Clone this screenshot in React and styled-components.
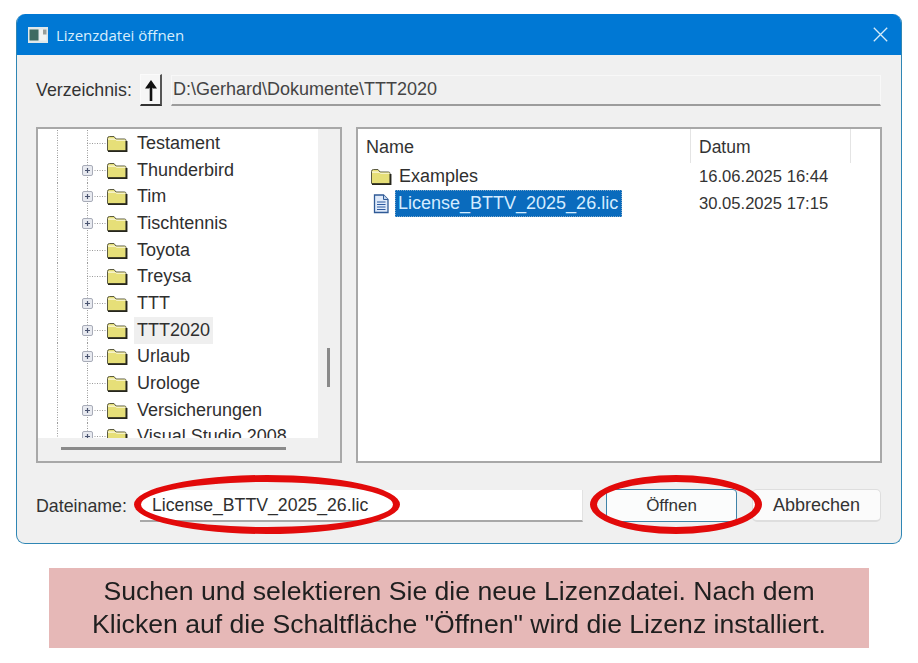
import React from 'react'
import styled, { createGlobalStyle } from 'styled-components'

const treeItems = [
  { name: 'Testament' },
  { name: 'Thunderbird', expandable: true },
  { name: 'Tim', expandable: true },
  { name: 'Tischtennis', expandable: true },
  { name: 'Toyota' },
  { name: 'Treysa' },
  { name: 'TTT', expandable: true },
  { name: 'TTT2020', expandable: true, current: true },
  { name: 'Urlaub', expandable: true },
  { name: 'Urologe' },
  { name: 'Versicherungen', expandable: true },
  { name: 'Visual Studio 2008', expandable: true },
]

const FolderShape = () => (
  <>
    <path d="M1.5 15V3.5Q1.5 1.5 3.5 1.5H8L10 4H18.5Q20 4 20 5.5V15Q20 16 18.5 16H2.5Q1.5 16 1.5 15Z" fill="#e6df78" stroke="#4a4a34" strokeWidth="0.9" />
    <path d="M2 4.8H9.5L10.5 5.8H19.5V4.8H10.5L8.5 3.4H2Z" fill="#fbf9e0" />
    <path d="M2 16.2H20.6V6" fill="none" stroke="#26261c" strokeWidth="1.7" />
  </>
)

const FolderIcon = () => (
  <svg width="22" height="18" viewBox="0 0 22 18">
    <FolderShape />
  </svg>
)

const TreeGlyph = ({ expandable }) => (
  <TreeSvg width="80" height="27" viewBox="0 0 80 27">
    <path d="M0.5 0V27" stroke="#9a9a9a" strokeDasharray="1 1.5" />
    <path d="M30.5 0V27" stroke="#9a9a9a" strokeDasharray="1 1.5" />
    <path d="M30 13.5H49" stroke="#9a9a9a" strokeDasharray="1 1.5" />
    {expandable && (
      <>
        <rect x="25.5" y="8.5" width="10" height="10" rx="1.5" fill="#e8eaf0" stroke="#a8acb8" />
        <path d="M28 13.5H33M30.5 11V16" stroke="#4a5470" strokeWidth="1.2" />
      </>
    )}
    <g transform="translate(49 5)">
      <FolderShape />
    </g>
  </TreeSvg>
)

const DocIcon = () => (
  <svg width="18" height="20" viewBox="0 0 18 20">
    <path d="M2.5 1H11.5L16 5.5V18.5H2.5Z" fill="#dfeafa" stroke="#2f5a96" strokeWidth="1.3" />
    <path d="M11.5 1V5.5H16" fill="#c4d6ee" stroke="#2f5a96" />
    <path d="M5 8H13.5M5 10.5H13.5M5 13H13.5M5 15.5H13.5" stroke="#2d5aa0" strokeWidth="1.2" />
  </svg>
)

export default function App() {
  return (
    <Page>
      <GlobalStyle />
      <Dialog>
        <TitleBar>
          <svg width="20" height="16" viewBox="0 0 20 16">
            <rect width="20" height="16" fill="#dfe8ea" />
            <rect x="1.5" y="2.5" width="9" height="11" fill="#3d6b62" />
            <rect x="11.5" y="2.5" width="7" height="11" fill="#f2f4f2" />
            <rect x="15" y="2.5" width="3.5" height="5" fill="#9a9f9a" />
          </svg>
          <TitleText>Lizenzdatei öffnen</TitleText>
          <CloseIcon width="15" height="15" viewBox="0 0 15 15">
            <path d="M0.8 0.8L14.2 14.2M14.2 0.8L0.8 14.2" stroke="#d6ecfa" strokeWidth="1.3" />
          </CloseIcon>
        </TitleBar>

        <Content>
          <Toolbar>
            <FieldLabel>Verzeichnis:</FieldLabel>
            <UpButton>
              <svg width="14" height="24" viewBox="0 0 14 24">
                <path d="M7 23V5" fill="none" stroke="#111" strokeWidth="2.6" />
                <path d="M7 2L13 10.5H9L7 8.5L5 10.5H1Z" fill="#111" />
              </svg>
            </UpButton>
            <PathField>D:\Gerhard\Dokumente\TTT2020</PathField>
          </Toolbar>

          <Panels>
            <TreePanel>
              <TreeView>
                {treeItems.map(item => (
                  <TreeRow key={item.name}>
                    <TreeGlyph expandable={item.expandable} />
                    <TreeLabel $current={item.current}>{item.name}</TreeLabel>
                  </TreeRow>
                ))}
              </TreeView>
              <VerticalTrack>
                <VerticalThumb />
              </VerticalTrack>
              <HorizontalTrack>
                <HorizontalThumb />
              </HorizontalTrack>
              <ScrollCorner />
            </TreePanel>

            <FilePanel>
              <FileGrid>
                <HeaderCell>Name</HeaderCell>
                <HeaderCell>Datum</HeaderCell>
                <HeaderCell />
              </FileGrid>
              <FileGrid>
                <NameCell>
                  <FolderIcon />
                  <FileName>Examples</FileName>
                </NameCell>
                <DateCell>16.06.2025 16:44</DateCell>
              </FileGrid>
              <FileGrid>
                <NameCell>
                  <DocSlot>
                    <DocIcon />
                  </DocSlot>
                  <FileName $selected>License_BTTV_2025_26.lic</FileName>
                </NameCell>
                <DateCell>30.05.2025 17:15</DateCell>
              </FileGrid>
            </FilePanel>
          </Panels>

          <Footer>
            <FieldLabel>Dateiname:</FieldLabel>
            <NameInput>License_BTTV_2025_26.lic</NameInput>
            <PrimaryButton>Öffnen</PrimaryButton>
            <SecondaryButton>Abbrechen</SecondaryButton>
            <NameOval />
            <ButtonOval />
          </Footer>
        </Content>
      </Dialog>

      <Caption>
        Suchen und selektieren Sie die neue Lizenzdatei. Nach dem
        <br />
        Klicken auf die Schaltfläche "Öffnen" wird die Lizenz installiert.
      </Caption>
    </Page>
  )
}

const GlobalStyle = createGlobalStyle`
  * {
    box-sizing: border-box;
  }

  body {
    margin: 0;
    background: #fff;
    font-family: 'Liberation Sans', Arial, sans-serif;
    color: #2b2b2b;
  }
`

const Page = styled.div`
  width: 918px;
  height: 663px;
  padding: 14px 16px 0;
  overflow: hidden;
  filter: blur(0.35px);
`

const Dialog = styled.div`
  width: 886px;
  height: 530px;
  border: 1px solid #2f86b4;
  border-top: 0;
  border-radius: 9px;
  background: #f0f0f0;
  overflow: hidden;
`

const TitleBar = styled.div`
  height: 41px;
  margin: 0 -1px;
  padding: 0 14px 0 12px;
  display: flex;
  align-items: center;
  gap: 8px;
  background: #0078d4;
`

const TitleText = styled.span`
  flex: 1;
  font-family: 'Open Sans', sans-serif;
  font-size: 15px;
  color: #d8eefc;
`

const CloseIcon = styled.svg`
  display: block;
`

const Content = styled.div`
  padding: 19px 19px 0;
`

const Toolbar = styled.div`
  height: 32px;
  display: flex;
  align-items: center;
`

const FieldLabel = styled.span`
  width: 104px;
  flex: none;
  font-size: 17.8px;
  color: #333;
  padding-top: 1px;
`

const UpButton = styled.div`
  width: 22px;
  height: 32px;
  flex: none;
  display: flex;
  align-items: center;
  justify-content: center;
  background: #f6f6f6;
  border-top: 1px solid #fbfbfb;
  border-left: 1px solid #fbfbfb;
  border-right: 2px solid #555;
  border-bottom: 2px solid #333;
`

const PathField = styled.div`
  flex: 1;
  height: 31px;
  margin: 0 1px 0 9px;
  padding-left: 1px;
  display: flex;
  align-items: center;
  font-size: 18px;
  color: #444;
  background: #f0f0f0;
  border-top: 1px solid #f8f8f8;
  border-left: 1px solid #f8f8f8;
  border-right: 1px solid #f8f8f8;
  border-bottom: 2px solid #9c9c9c;
`

const Panels = styled.div`
  margin-top: 21px;
  display: grid;
  grid-template-columns: 306px 526px;
  gap: 14px;
  height: 336px;
`

const TreePanel = styled.div`
  display: grid;
  grid-template-columns: 1fr 22px;
  grid-template-rows: 1fr 23px;
  min-height: 0;
  border: 2px solid #a8a8a8;
  background: #f0f0f0;
`

const TreeView = styled.div`
  padding: 1px 0 0 19px;
  background: #fff;
  overflow: hidden;
`

const TreeRow = styled.div`
  height: 26.7px;
  display: flex;
  align-items: center;
  font-size: 18px;
`

const TreeSvg = styled.svg`
  display: block;
  flex: none;
`

const TreeLabel = styled.span`
  height: 27px;
  padding: 0 3px;
  margin-left: -3px;
  line-height: 27px;
  color: #2f2f2f;
  background: ${props => (props.$current ? '#efefef' : 'transparent')};
`

const VerticalTrack = styled.div`
  padding: 219px 0 0 9px;
`

const VerticalThumb = styled.div`
  width: 3px;
  height: 39px;
  background: #8a8a8a;
`

const HorizontalTrack = styled.div`
  padding: 9px 0 0 23px;
`

const HorizontalThumb = styled.div`
  width: 225px;
  height: 3px;
  background: #8a8a8a;
`

const ScrollCorner = styled.div``

const FilePanel = styled.div`
  border: 2px solid #a8a8a8;
  background: #fff;
`

const FileGrid = styled.div`
  display: grid;
  grid-template-columns: 333px 160px 1fr;
  height: 27px;
  align-items: center;

  &:first-child {
    height: 34px;
  }
`

const HeaderCell = styled.div`
  height: 34px;
  padding: 2px 0 0 8px;
  display: flex;
  align-items: center;
  font-size: 17.5px;
  color: #333;
  border-right: 1px solid #e4e4e4;

  &:first-child {
    font-size: 18px;
  }

  &:last-child {
    border-right: 0;
  }
`

const NameCell = styled.div`
  height: 27px;
  padding-left: 12px;
  display: flex;
  align-items: center;
  gap: 7px;
`

const DocSlot = styled.div`
  width: 21px;
  height: 20px;
  padding-left: 2px;
`

const FileName = styled.span`
  height: 27px;
  padding: 0 4px 0 3px;
  margin-left: -3px;
  line-height: 27px;
  font-size: 18px;
  color: ${props => (props.$selected ? '#d4ecff' : '#2f2f2f')};
  background: ${props => (props.$selected ? '#0a6bbd' : 'transparent')};
  outline: ${props => (props.$selected ? '1px dotted #7fa8c8' : 'none')};
  outline-offset: -1px;
`

const DateCell = styled.div`
  padding-left: 8px;
  font-size: 16.6px;
  color: #333;
`

const Footer = styled.div`
  position: relative;
  margin-top: 26px;
  height: 33px;
  padding-right: 1px;
  display: flex;
  align-items: center;
`

const NameInput = styled.div`
  flex: 1;
  height: 32px;
  padding: 1px 0 0 12px;
  display: flex;
  align-items: center;
  font-size: 17.7px;
  color: #2f2f2f;
  background: #fff;
  border-bottom: 2px solid #a8a8a8;
  border-right: 1px solid #e2e2e2;
`

const PrimaryButton = styled.div`
  width: 131px;
  height: 33px;
  margin-left: 23px;
  padding-top: 1px;
  display: flex;
  align-items: center;
  justify-content: center;
  font-size: 17px;
  color: #333;
  background: #fbfcfc;
  border: 1.5px solid #3f83a8;
  border-radius: 4px;
`

const SecondaryButton = styled.div`
  width: 129px;
  height: 33px;
  margin-left: 15px;
  padding-top: 1px;
  display: flex;
  align-items: center;
  justify-content: center;
  font-size: 18px;
  color: #333;
  background: #fbfbfb;
  border: 1px solid #dedede;
  border-bottom-width: 2px;
  border-radius: 5px;
`

const Oval = styled.div`
  position: absolute;
  top: -14px;
  height: 59px;
  border: 7px solid #e20a0a;
  border-radius: 50%;
`

const NameOval = styled(Oval)`
  left: 98px;
  width: 266px;
`

const ButtonOval = styled(Oval)`
  left: 554px;
  width: 172px;
`

const Caption = styled.div`
  width: 820px;
  height: 80px;
  margin: 24px 0 0 33px;
  display: flex;
  align-items: center;
  justify-content: center;
  text-align: center;
  font-size: 26.6px;
  line-height: 33px;
  color: #1f1f1f;
  background: #e6b8b7;
`
